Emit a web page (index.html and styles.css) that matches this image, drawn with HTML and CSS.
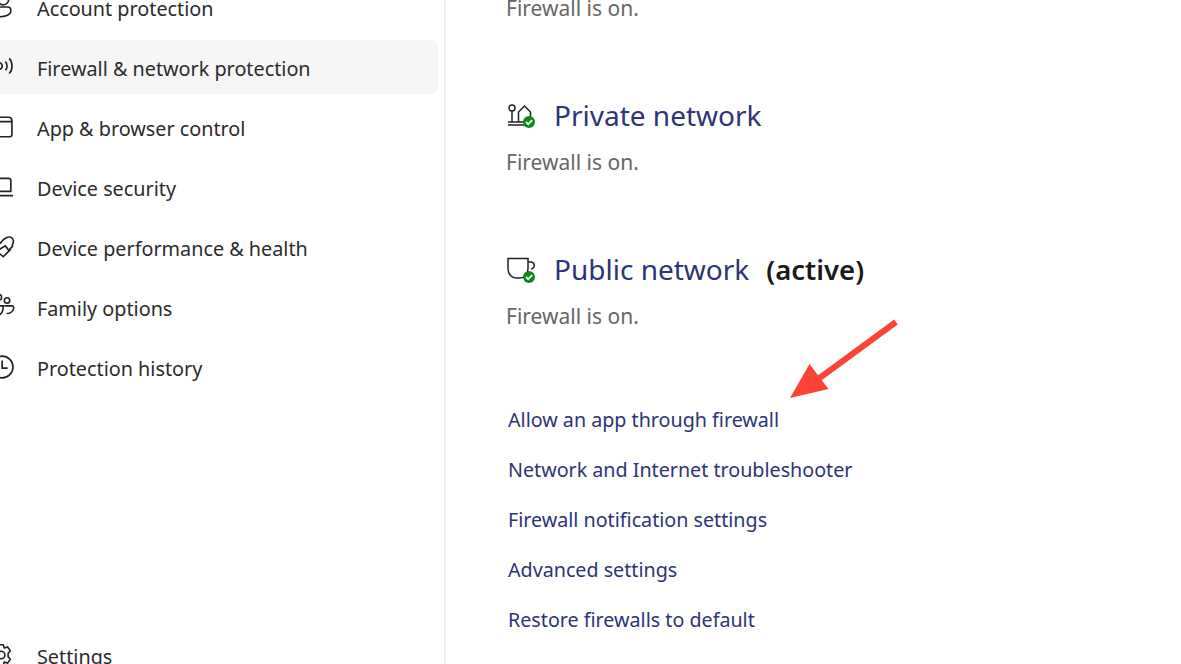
FILE: index.html
```html
<!DOCTYPE html>
<html lang="en">
<head>
<meta charset="utf-8">
<title>Firewall &amp; network protection</title>
<link rel="stylesheet" href="styles.css">
</head>
<body>
<div class="app">
  <nav class="sidebar">
    <ul class="menu">
      <li class="item">
        <svg class="icon" viewBox="0 0 24 24"><circle cx="3" cy="5" r="5"/><path d="M-7 12h14a3 3 0 0 1 3 3v1c0 3-5 5-10 5s-9-2-9-5"/></svg>
        <span class="label">Account protection</span>
      </li>
      <li class="item active">
        <svg class="icon" viewBox="0 0 24 24"><circle cx="-1" cy="11" r="3"/><path d="M-1 14v8M5 7c2 2 2 6 0 8M8.500 4c3.500 3.500 3.500 10.500 0 14"/></svg>
        <span class="label">Firewall &amp; network protection</span>
      </li>
      <li class="item">
        <svg class="icon" viewBox="0 0 24 24"><path d="M-5 3h13a3 3 0 0 1 3 3v13a2 2 0 0 1-2 2H-5M-5 7h16"/></svg>
        <span class="label">App &amp; browser control</span>
      </li>
      <li class="item">
        <svg class="icon" viewBox="0 0 24 24"><path d="M-5 4H8a2 2 0 0 1 2 2v10H-5M-5 20h17"/></svg>
        <span class="label">Device security</span>
      </li>
      <li class="item">
        <svg class="icon" viewBox="0 0 24 24"><path d="M0 9C3 4 8 2 10 3c3 1 3 5 1 8M12 11l-4 4-3-4-7 4M10 14l-7 7-6-5"/></svg>
        <span class="label">Device performance &amp; health</span>
      </li>
      <li class="item">
        <svg class="icon" viewBox="0 0 24 24"><circle cx="6.500" cy="6" r="2.500"/><circle cx="-1" cy="3" r="2.500"/><path d="M-4 11h7c0 6-2 9-7 9M4 11h7c2 0 2 2 1 4-1 2-3 3-6 3"/></svg>
        <span class="label">Family options</span>
      </li>
      <li class="item">
        <svg class="icon" viewBox="0 0 24 24"><circle cx="2" cy="12" r="10"/><path d="M2 6v7h5"/></svg>
        <span class="label">Protection history</span>
      </li>
    </ul>
    <div class="item settings">
      <svg class="icon" viewBox="0 0 24 24"><circle cx="1" cy="12" r="3.500"/><path d="M-1 2.500h4l1 3 3-1 2.500 3.500-2 2.500v3l2 2.500-2.500 3.500-3-1-1 3h-4"/></svg>
      <span class="label">Settings</span>
    </div>
  </nav>
  <main class="content">
    <p class="status">Firewall is on.</p>
    <section class="network">
      <h2 class="network-title">
        <svg class="net-icon" viewBox="0 0 30 26">
          <circle cx="6" cy="5" r="3"/><path d="M6 8v11M12.500 19V9l6-6 6 6v5M2 19h18M2 22h18"/>
          <circle class="badge" cx="23" cy="19" r="6"/><path class="tick" d="M20 19l2.200 2.200 4-4"/>
        </svg>
        <span class="net-name">Private network</span>
      </h2>
      <p class="status">Firewall is on.</p>
    </section>
    <section class="network">
      <h2 class="network-title">
        <svg class="net-icon" viewBox="0 0 30 26">
          <path d="M2 1.500h20v10c0 6-4 9.500-8 9.500h-4c-4 0-8-3.500-8-9.500zM22 5h2.500a3.500 3.500 0 0 1 .5 7"/>
          <circle class="badge" cx="23" cy="20" r="6"/><path class="tick" d="M20 20l2.200 2.200 4-4"/>
        </svg>
        <span class="net-name">Public network</span>
        <span class="net-active">(active)</span>
      </h2>
      <p class="status">Firewall is on.</p>
    </section>
    <div class="links">
      <a class="link" href="#">Allow an app through firewall</a>
      <a class="link" href="#">Network and Internet troubleshooter</a>
      <a class="link" href="#">Firewall notification settings</a>
      <a class="link" href="#">Advanced settings</a>
      <a class="link" href="#">Restore firewalls to default</a>
    </div>
  </main>
</div>
<svg class="arrow" viewBox="0 0 120 90" width="120" height="90">
  <path class="arrow-line" d="M106 2 L20 65"/>
  <path class="arrow-head" d="M0 78 L19.500 44 L38.500 69 Z"/>
</svg>
</body>
</html>
```
FILE: styles.css
```css
* { box-sizing: border-box; }
html, body { margin: 0; height: 100%; overflow: hidden; background: #fff; }
body { font-family: "Noto Sans", "Open Sans", sans-serif; color: #1b1b1b; position: relative; }
.app { display: flex; height: 664px; overflow: hidden; }

.sidebar {
  width: 446px; flex: none; height: 664px; border-right: 2px solid #efefef;
  display: flex; flex-direction: column; overflow: hidden;
}
.menu { list-style: none; margin: -20px 0 0; padding: 0 6px 0 0; display: flex; flex-direction: column; gap: 6px; }
.item {
  height: 54px; display: flex; align-items: center; gap: 11px;
  font-size: 19.800px; color: #2b2b2b; border-radius: 0 7px 7px 0; white-space: nowrap;
}
.label { padding-top: 2px; }
.item.active { background: #f6f6f6; }
.icon { width: 26px; height: 26px; flex: none; overflow: visible; fill: none; stroke: #222; stroke-width: 1.500; }
.settings { margin-top: auto; margin-bottom: -18px; }

.content { flex: 1; padding-left: 60px; margin-top: -7px; display: flex; flex-direction: column; }
.network { display: flex; flex-direction: column; gap: 9px; margin-top: 71px; }
.network-title {
  margin: 0; display: flex; align-items: center; height: 44px; font-weight: 400; font-size: 28px;
  white-space: nowrap;
}
.net-icon { width: 30px; height: 26px; flex: none; margin-right: 18px; fill: none; stroke: #222; stroke-width: 1.500; }
.net-icon .badge { fill: #0b8a1a; stroke: none; }
.net-icon .tick { stroke: #fff; stroke-width: 1.800; }
.net-name { color: #2d3478; padding-bottom: 2px; }
.net-active { font-weight: 600; margin-left: 17px; font-size: 27.500px; color: #1b1b1b; padding-bottom: 2px; }
.status { margin: 0; font-size: 21px; color: #666; line-height: 30px; white-space: nowrap; }
.links { display: flex; flex-direction: column; margin-top: 64px; }
.link { height: 50px; line-height: 50px; font-size: 19.700px; color: #2d3478; text-decoration: none; white-space: nowrap; padding-left: 2px; }

.arrow { position: absolute; left: 790px; top: 320px; overflow: visible; }
.arrow-line { fill: none; stroke: #fb4338; stroke-width: 6; }
.arrow-head { fill: #fb4338; }
```
